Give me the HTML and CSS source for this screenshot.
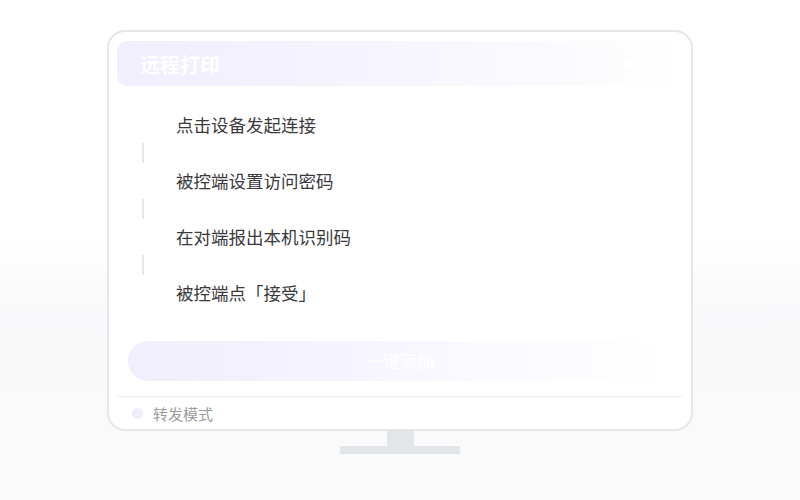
FILE: index.html
```html
<!DOCTYPE html>
<html lang="zh-CN">
<head>
<meta charset="utf-8">
<title>远程打印</title>
<link rel="stylesheet" href="styles.css">
</head>
<body>
<div class="page">
  <div class="monitor">
    <div class="screen">
      <div class="header">
        <span class="title">远程打印</span>
        <span class="dots"><i></i><i></i><i></i></span>
      </div>
      <div class="steps">
        <div class="step">点击设备发起连接</div>
        <div class="connector"></div>
        <div class="step">被控端设置访问密码</div>
        <div class="connector"></div>
        <div class="step">在对端报出本机识别码</div>
        <div class="connector"></div>
        <div class="step">被控端点「接受」</div>
      </div>
      <div class="btn"><span class="btn-label">一键添加</span></div>
      <div class="divider"></div>
      <div class="footer">
        <span class="dot"></span>
        <span class="mode">转发模式</span>
      </div>
    </div>
    <div class="neck"></div>
    <div class="base"></div>
  </div>
</div>
</body>
</html>
```
FILE: styles.css
```css
* { box-sizing: border-box; }
html, body { margin: 0; padding: 0; }
body {
  width: 800px;
  height: 500px;
  overflow: hidden;
  font-family: "Noto Sans CJK SC", "Noto Sans", sans-serif;
  background: linear-gradient(to bottom, #ffffff 0%, #ffffff 47%, #f9f9fb 62%, #fafafb 100%);
}
.page {
  display: flex;
  justify-content: center;
  padding-top: 30px;
}
.monitor {
  display: flex;
  flex-direction: column;
  align-items: center;
}
.screen {
  width: 586px;
  height: 401px;
  border: 2px solid #e4e6ea;
  border-radius: 18px;
  background: #ffffff;
  padding: 9px 9px 0 8px;
  display: flex;
  flex-direction: column;
}
.header {
  height: 45px;
  border-radius: 10px;
  background: linear-gradient(to right, #f1eefd 0%, #f6f4fe 45%, #fbfbfe 80%, #ffffff 100%);
  display: flex;
  align-items: center;
  justify-content: space-between;
  padding: 0 22px 0 23px;
}
.title {
  color: #ffffff;
  font-size: 20px;
  font-weight: 700;
  line-height: 1;
  position: relative;
  top: 1px;
}
.dots { display: flex; gap: 6px; }
.dots i {
  display: block;
  width: 8px;
  height: 8px;
  border-radius: 50%;
  background: #ffffff;
}
.steps {
  margin-top: 21px;
  display: flex;
  flex-direction: column;
}
.step {
  height: 36px;
  line-height: 36px;
  padding-left: 59px;
  font-size: 17.5px;
  color: #3a3a3c;
}
.connector {
  height: 20px;
  width: 2px;
  margin-left: 25px;
  background: #e6e7ea;
}
.btn {
  margin: 30px 0 0 11px;
  width: 544px;
  height: 40px;
  border-radius: 20px;
  background: linear-gradient(to right, #f1eefd 0%, #f5f3fe 35%, #fafaff 65%, #ffffff 100%);
  color: #ffffff;
  font-size: 17px;
  display: flex;
  align-items: center;
  justify-content: center;
}
.btn-label {
  position: relative;
  top: -1px;
}
.divider {
  margin-top: 15px;
  height: 1px;
  background: #eceef2;
}
.footer {
  height: 32px;
  display: flex;
  align-items: center;
  padding-left: 15px;
}
.dot {
  width: 11px;
  height: 11px;
  border-radius: 50%;
  background: #efedfd;
}
.mode {
  margin-left: 10px;
  font-size: 15px;
  color: #9c9ca0;
}
.neck {
  width: 27px;
  height: 15px;
  background: #e2e5e9;
}
.base {
  width: 120px;
  height: 8px;
  background: #e2e5e9;
}
```
